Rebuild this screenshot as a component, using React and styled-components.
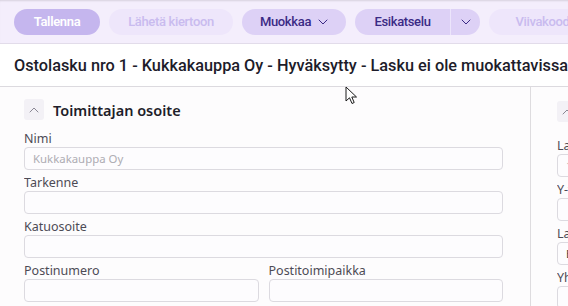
import React from 'react';
import styled, { createGlobalStyle } from 'styled-components';

const GlobalStyle = createGlobalStyle`
  body {
    margin: 0;
    background: #fdfcfd;
    font-family: "Noto Sans", "Open Sans", sans-serif;
    overflow: hidden;
  }
`;

const Page = styled.div`
  width: 568px;
  height: 306px;
  position: relative;
  overflow: hidden;
`;

const Toolbar = styled.div`
  height: 44px;
  box-sizing: border-box;
  display: flex;
  align-items: center;
  gap: 9px;
  padding: 0 14px;
  background: #f4eefc;
  border-bottom: 1px solid #e2dcea;
  box-shadow: inset 0 2px 2px -1px rgba(0, 0, 0, 0.12);
  white-space: nowrap;
`;

const tones = {
  primary: { bg: '#c5b6ee', fg: '#ffffff', weight: 600 },
  muted: { bg: '#eee6fb', fg: '#c9bbef', weight: 500 },
  normal: { bg: '#ddd1f6', fg: '#3b2a85', weight: 500 },
};

const Button = styled.button`
  flex: none;
  height: 26px;
  width: ${(p) => p.$w}px;
  border: none;
  border-radius: 13px;
  padding: 0;
  display: flex;
  align-items: center;
  justify-content: center;
  gap: 7px;
  font-family: Roboto, "Noto Sans", sans-serif;
  font-size: 13px;
  letter-spacing: -0.35px;
  background: ${(p) => tones[p.$tone].bg};
  color: ${(p) => tones[p.$tone].fg};
  font-weight: ${(p) => tones[p.$tone].weight};
`;

const Split = styled.div`
  flex: none;
  display: flex;
  height: 26px;
  border-radius: 13px;
  overflow: hidden;
  background: #ddd1f6;
`;

const SplitPart = styled.button`
  border: none;
  background: transparent;
  height: 26px;
  width: ${(p) => p.$w}px;
  padding: 0;
  font-family: Roboto, "Noto Sans", sans-serif;
  font-size: 13px;
  letter-spacing: -0.35px;
  font-weight: 500;
  color: #3b2a85;
  display: flex;
  align-items: center;
  justify-content: center;
  & + & {
    border-left: 1px solid #ece5fb;
  }
`;

const TitleBar = styled.div`
  height: 43px;
  box-sizing: border-box;
  display: flex;
  align-items: center;
  padding: 0 14px;
  background: #ffffff;
  border-bottom: 1px solid #dcdadf;
  font-family: Roboto, "Noto Sans", sans-serif;
  font-size: 16.3px;
  font-weight: 500;
  color: #1d1c2a;
  white-space: nowrap;
`;

const Content = styled.div`
  display: flex;
`;

const Panel = styled.section`
  flex: none;
  box-sizing: border-box;
  width: ${(p) => p.$w}px;
  padding: ${(p) => p.$pad};
  border-right: ${(p) => (p.$divider ? '1px solid #dedcdf' : 'none')};
  height: 220px;
`;

const SectionHead = styled.div`
  display: flex;
  align-items: center;
  gap: 9px;
  height: 21px;
  font-size: 14.5px;
  font-weight: 600;
  color: #1f1e2a;
  white-space: nowrap;
`;

const Toggle = styled.span`
  flex: none;
  width: 20px;
  height: 21px;
  border-radius: 3px;
  background: #f3f1f6;
  display: flex;
  align-items: center;
  justify-content: center;
`;

const Row = styled.div`
  display: grid;
  grid-template-columns: ${(p) => (p.$cols === 2 ? '1fr 1fr' : '1fr')};
  column-gap: 10px;
`;

const Field = styled.label`
  display: block;
  min-width: 0;
`;

const Label = styled.div`
  padding-top: ${(p) => p.$top ?? 4}px;
  height: 17px;
  line-height: 17px;
  font-size: 12.5px;
  color: #4d4b55;
  white-space: nowrap;
  overflow: hidden;
`;

const Input = styled.div`
  box-sizing: border-box;
  height: 23px;
  border: 1px solid #dcdae0;
  border-radius: 4px;
  background: #fdfcfe;
  padding: 0 8px;
  font-size: 11.4px;
  line-height: 21px;
  color: ${(p) => (p.$dim ? '#aeacb3' : '#3a3942')};
  white-space: nowrap;
  overflow: hidden;
`;

const Cursor = styled.svg`
  position: absolute;
  left: 345px;
  top: 86px;
`;

const Chevron = ({ up, color = '#3b2a85' }) => (
  <svg width="10" height="6" viewBox="0 0 10 6">
    <path
      d={up ? 'M1 5 L5 1 L9 5' : 'M1 1 L5 5 L9 1'}
      fill="none"
      stroke={color}
      strokeWidth="1"
      strokeLinecap="round"
      strokeLinejoin="round"
    />
  </svg>
);

const App = () => {
  return (
    <Page>
      <GlobalStyle />
      <Toolbar>
        <Button $tone="primary" $w={86}>Tallenna</Button>
        <Button $tone="muted" $w={124}>Lähetä kiertoon</Button>
        <Button $tone="normal" $w={104}>
          Muokkaa <Chevron />
        </Button>
        <Split>
          <SplitPart $w={95}>Esikatselu</SplitPart>
          <SplitPart $w={30}>
            <Chevron />
          </SplitPart>
        </Split>
        <Button $tone="muted" $w={110}>Viivakoodi</Button>
      </Toolbar>
      <TitleBar>Ostolasku nro 1 - Kukkakauppa Oy - Hyväksytty - Lasku ei ole muokattavissa</TitleBar>
      <Content>
        <Panel $w={531} $divider $pad="12px 27px 0 24px">
          <SectionHead>
            <Toggle>
              <Chevron up color="#8a8794" />
            </Toggle>
            Toimittajan osoite
          </SectionHead>
          <Row>
            <Field>
              <Label $top={10}>Nimi</Label>
              <Input $dim>Kukkakauppa Oy</Input>
            </Field>
          </Row>
          <Row>
            <Field>
              <Label>Tarkenne</Label>
              <Input />
            </Field>
          </Row>
          <Row>
            <Field>
              <Label>Katuosoite</Label>
              <Input />
            </Field>
          </Row>
          <Row $cols={2}>
            <Field>
              <Label>Postinumero</Label>
              <Input />
            </Field>
            <Field>
              <Label>Postitoimipaikka</Label>
              <Input />
            </Field>
          </Row>
        </Panel>
        <Panel $w={200} $pad="14px 0 0 26px">
          <SectionHead>
            <Toggle>
              <Chevron up color="#8a8794" />
            </Toggle>
            Laskun tiedot
          </SectionHead>
          <Row>
            <Field>
              <Label $top={15}>Laskunumero</Label>
              <Input $dim>1</Input>
            </Field>
          </Row>
          <Row>
            <Field>
              <Label>Y-tunnus</Label>
              <Input />
            </Field>
          </Row>
          <Row>
            <Field>
              <Label>Laskun päivä</Label>
              <Input>Ei</Input>
            </Field>
          </Row>
          <Row>
            <Field>
              <Label>Yhteyshenkilö</Label>
              <Input />
            </Field>
          </Row>
        </Panel>
      </Content>
      <Cursor width="14" height="20" viewBox="0 0 14 20">
        <path d="M1 1 L1 15 L4.5 11.8 L7 17.5 L9.2 16.5 L6.8 11 L11.5 11 Z" fill="#ffffff" stroke="#1a1a1a" strokeWidth="1" strokeLinejoin="round" />
      </Cursor>
    </Page>
  );
};

export default App;
